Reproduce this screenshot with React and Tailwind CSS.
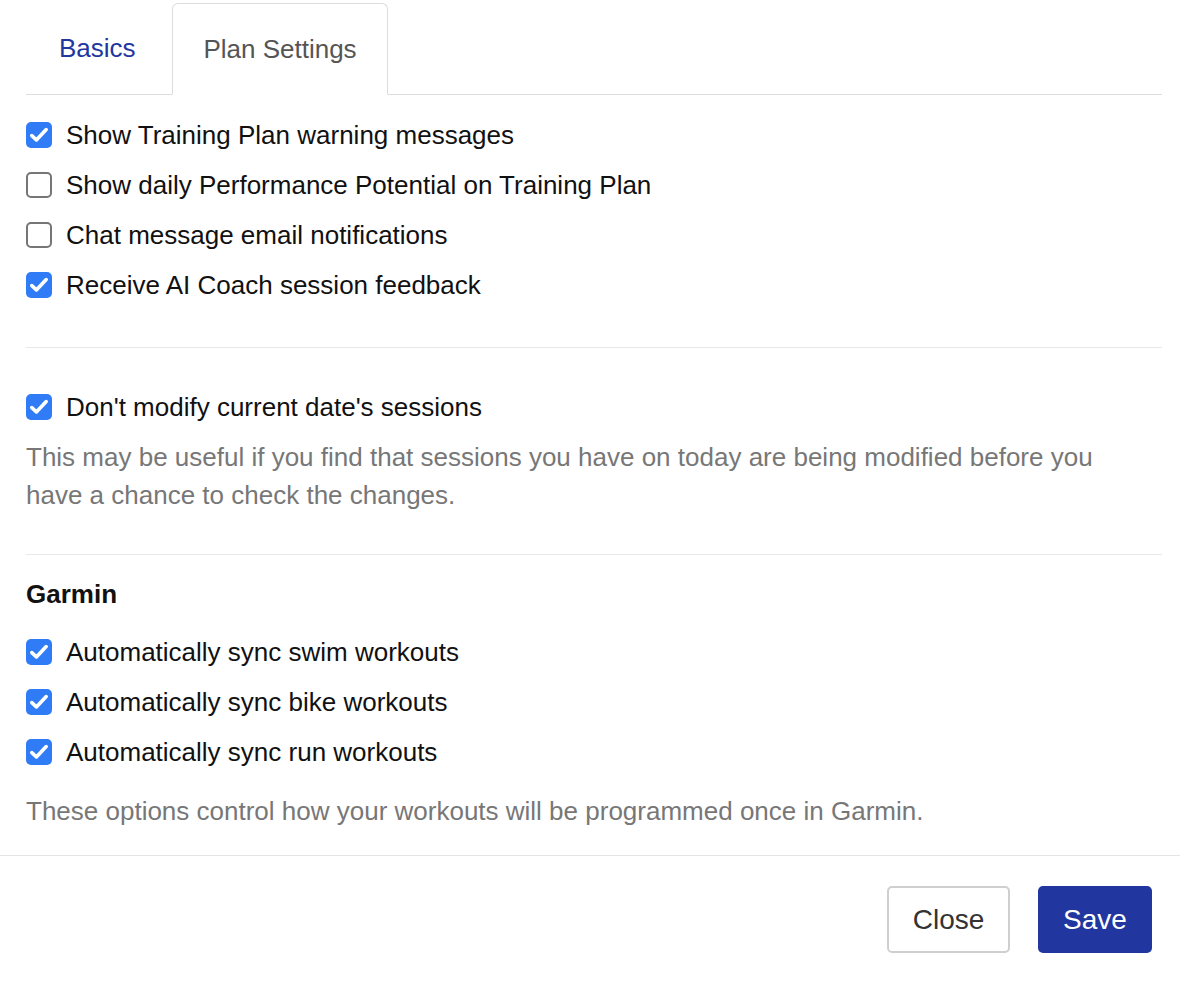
import React, { useState } from 'react';

const Checkbox = ({ checked, onChange }) => (
  <button
    type="button"
    onClick={onChange}
    className={`w-[26px] h-[26px] rounded-[5px] flex items-center justify-center shrink-0 ${
      checked ? 'bg-[#2f7cf6]' : 'bg-white border-[2px] border-[#767676]'
    }`}
  >
    {checked && (
      <svg width="26" height="26" viewBox="0 0 26 26" fill="none">
        <path d="M5.8 13.6 L10.4 17.9 L20.2 7.6" stroke="white" strokeWidth="3.6" strokeLinecap="round" strokeLinejoin="round" />
      </svg>
    )}
  </button>
);

const CheckRow = ({ label, checked, onToggle }) => (
  <label className="h-[50px] flex items-center cursor-pointer">
    <Checkbox checked={checked} onChange={onToggle} />
    <span className="ml-[14px] text-[26px] text-[#111]">{label}</span>
  </label>
);

const App = () => {
  const [opts, setOpts] = useState({
    warnings: true,
    potential: false,
    chatEmail: false,
    aiFeedback: true,
    noModify: true,
    swim: true,
    bike: true,
    run: true
  });

  const toggle = (key) => setOpts((o) => ({ ...o, [key]: !o[key] }));

  return (
    <div className="w-[1180px] h-[984px] bg-white font-['Liberation_Sans',Arial,sans-serif]">
      <div className="pl-[26px] pr-[18px]">
        {/* Tabs */}
        <div className="flex items-end pt-[3px] border-b border-[#dddddd]">
          <div className="h-[91px] w-[146px] flex items-center pl-[33px] text-[26px] text-[#2236a0]">
            Basics
          </div>
          <div className="h-[92px] w-[216px] -mb-px flex items-center justify-center text-[26px] text-[#555] bg-white border border-[#dddddd] border-b-white rounded-t-[6px]">
            Plan Settings
          </div>
        </div>

        {/* General */}
        <div className="pt-[15px] pb-[37px] border-b border-[#e8e8e8]">
          <CheckRow label="Show Training Plan warning messages" checked={opts.warnings} onToggle={() => toggle('warnings')} />
          <CheckRow label="Show daily Performance Potential on Training Plan" checked={opts.potential} onToggle={() => toggle('potential')} />
          <CheckRow label="Chat message email notifications" checked={opts.chatEmail} onToggle={() => toggle('chatEmail')} />
          <CheckRow label="Receive AI Coach session feedback" checked={opts.aiFeedback} onToggle={() => toggle('aiFeedback')} />
        </div>

        {/* Current date */}
        <div className="pt-[34px] pb-[40px] border-b border-[#e8e8e8]">
          <CheckRow label="Don't modify current date's sessions" checked={opts.noModify} onToggle={() => toggle('noModify')} />
          <p className="mt-[6px] max-w-[1100px] text-[26px] leading-[38px] text-[#777]">
            This may be useful if you find that sessions you have on today are being modified before you have a chance to check the changes.
          </p>
        </div>

        {/* Garmin */}
        <div className="pt-[21px] pb-[25px]">
          <h3 className="text-[26px] leading-[36px] font-bold text-[#111]">Garmin</h3>
          <div className="mt-[15px]">
            <CheckRow label="Automatically sync swim workouts" checked={opts.swim} onToggle={() => toggle('swim')} />
            <CheckRow label="Automatically sync bike workouts" checked={opts.bike} onToggle={() => toggle('bike')} />
            <CheckRow label="Automatically sync run workouts" checked={opts.run} onToggle={() => toggle('run')} />
          </div>
          <p className="mt-[15px] text-[26px] leading-[38px] text-[#777]">
            These options control how your workouts will be programmed once in Garmin.
          </p>
        </div>
      </div>

      {/* Footer */}
      <div className="border-t border-[#e5e5e5] flex justify-end gap-[28px] pt-[30px] pr-[28px]">
        <button className="h-[67px] w-[123px] rounded-[5px] border-[2px] border-[#cfcfcf] bg-white text-[28px] text-[#333]">
          Close
        </button>
        <button className="h-[67px] w-[114px] rounded-[5px] bg-[#2236a0] text-[28px] text-white">
          Save
        </button>
      </div>
    </div>
  );
};

export default App;
